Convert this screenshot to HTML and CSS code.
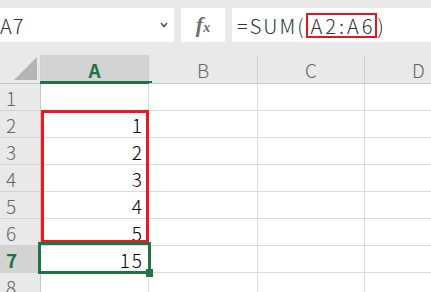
FILE: index.html
```html
<!DOCTYPE html>
<html lang="ja">
<head>
  <meta charset="UTF-8">
  <title>SUM</title>
  <link rel="stylesheet" href="styles.css">
</head>
<body>
  <div class="bar">
    <div class="namebox">
      <span class="name">A7</span>
      <svg class="chevron" width="8" height="6" viewBox="0 0 8 6"><polyline points="1,1 4,4.5 7,1" fill="none" stroke="#555" stroke-width="1.6"/></svg>
    </div>
    <div class="fx"><span class="fx-f">f</span><span class="fx-x">x</span></div>
    <div class="formula">=SUM(<span class="ref">A2:A6</span>)</div>
  </div>

  <div class="sheet">
    <div class="corner"><svg width="23" height="23" viewBox="0 0 23 23"><polygon points="23,0 23,23 0,23" fill="#b4b4b4"/></svg></div>
    <div class="colhead active">A</div>
    <div class="colhead">B</div>
    <div class="colhead">C</div>
    <div class="colhead">D</div>

    <div class="rowhead">1</div><div class="cell"></div><div class="cell"></div><div class="cell"></div><div class="cell"></div>
    <div class="rowhead">2</div><div class="cell">1</div><div class="cell"></div><div class="cell"></div><div class="cell"></div>
    <div class="rowhead">3</div><div class="cell">2</div><div class="cell"></div><div class="cell"></div><div class="cell"></div>
    <div class="rowhead">4</div><div class="cell">3</div><div class="cell"></div><div class="cell"></div><div class="cell"></div>
    <div class="rowhead">5</div><div class="cell">4</div><div class="cell"></div><div class="cell"></div><div class="cell"></div>
    <div class="rowhead">6</div><div class="cell">5</div><div class="cell"></div><div class="cell"></div><div class="cell"></div>
    <div class="rowhead active">7</div><div class="cell">15</div><div class="cell"></div><div class="cell"></div><div class="cell"></div>
    <div class="rowhead">8</div><div class="cell"></div><div class="cell"></div><div class="cell"></div><div class="cell"></div>

    <!-- range highlight and selection -->
    <div class="range"></div>
    <div class="selection"></div>
    <div class="handle"></div>
  </div>
</body>
</html>
```

FILE: styles.css
```css
body {
    margin: 0;
    width: 431px;
    height: 292px;
    overflow: hidden;
    background: #e9e9e9;
    font-family: "Noto Sans CJK JP", "Noto Sans", sans-serif;
    color: #333;
}
.bar {
    display: flex;
    gap: 7px;
    padding-top: 8px;
    height: 34px;
    margin-bottom: 13px;
}
.namebox {
    width: 174px;
    background: #fff;
    display: flex;
    align-items: center;
    justify-content: space-between;
    padding-right: 6px;
    box-sizing: border-box;
    font-size: 20px;
    font-weight: 300;
}
.name {
    letter-spacing: 1px;
}
.fx {
    width: 44px;
    background: #fff;
    display: flex;
    align-items: center;
    justify-content: center;
    font-family: "Liberation Serif", serif;
    font-style: italic;
    font-weight: bold;
    color: #6e6e6e;
}
.fx-f {
    font-size: 22px;
}
.fx-x {
    font-size: 14px;
    margin-top: 5px;
}
.formula {
    flex: 1;
    background: #fff;
    display: flex;
    align-items: center;
    padding-left: 5px;
    font-size: 20px;
    font-weight: 300;
    letter-spacing: 2px;
}
.ref {
    border: 2px solid #e3171f;
    padding: 0 0 0 2px;
    margin-left: 1px;
    line-height: 21px;
    letter-spacing: 3px;
}
.sheet {
    position: relative;
    display: grid;
    grid-template-columns: 41px 108px 109px 107px 108px;
    grid-template-rows: 29px;
    grid-auto-rows: 27px;
    font-size: 19px;
}
.corner {
    border-right: 1px solid #d0d0d0;
    border-bottom: 1px solid #c8c8c8;
    display: flex;
    align-items: flex-end;
    justify-content: flex-end;
    padding: 0 3px 3px 0;
}
.colhead {
    position: relative;
    border-right: 1px solid #d0d0d0;
    border-bottom: 1px solid #c8c8c8;
    display: flex;
    align-items: center;
    justify-content: center;
    color: #666;
    font-weight: 300;
}
.colhead.active {
    background: #d3d3d3;
    color: #217346;
    font-weight: bold;
}
.colhead.active::after {
    content: "";
    position: absolute;
    left: -1px;
    right: -4px;
    bottom: -1px;
    height: 3px;
    background: #217346;
}
.rowhead {
    border-right: 1px solid #c6c6c6;
    border-bottom: 1px solid #d4d4d4;
    display: flex;
    align-items: center;
    padding-left: 6px;
    color: #666;
    font-weight: 300;
}
.rowhead.active {
    background: #d3d3d3;
    color: #217346;
    font-weight: bold;
}
.cell {
    background: #fff;
    border-right: 1px solid #d9d9d9;
    border-bottom: 1px solid #d9d9d9;
    display: flex;
    align-items: flex-end;
    justify-content: flex-end;
    padding: 0 4px 0 0;
    line-height: 1.2;
    color: #000;
    font-weight: 300;
    letter-spacing: 2px;
}
.range {
    position: absolute;
    left: 41px;
    top: 55px;
    width: 108px;
    height: 133px;
    border: 3px solid #e8191f;
    box-sizing: border-box;
}
.selection {
    position: absolute;
    left: 38px;
    top: 187px;
    width: 113px;
    height: 32px;
    border: 3px solid #217346;
    box-sizing: border-box;
}
.handle {
    position: absolute;
    left: 146px;
    top: 214px;
    width: 7px;
    height: 8px;
    background: #217346;
}
```
